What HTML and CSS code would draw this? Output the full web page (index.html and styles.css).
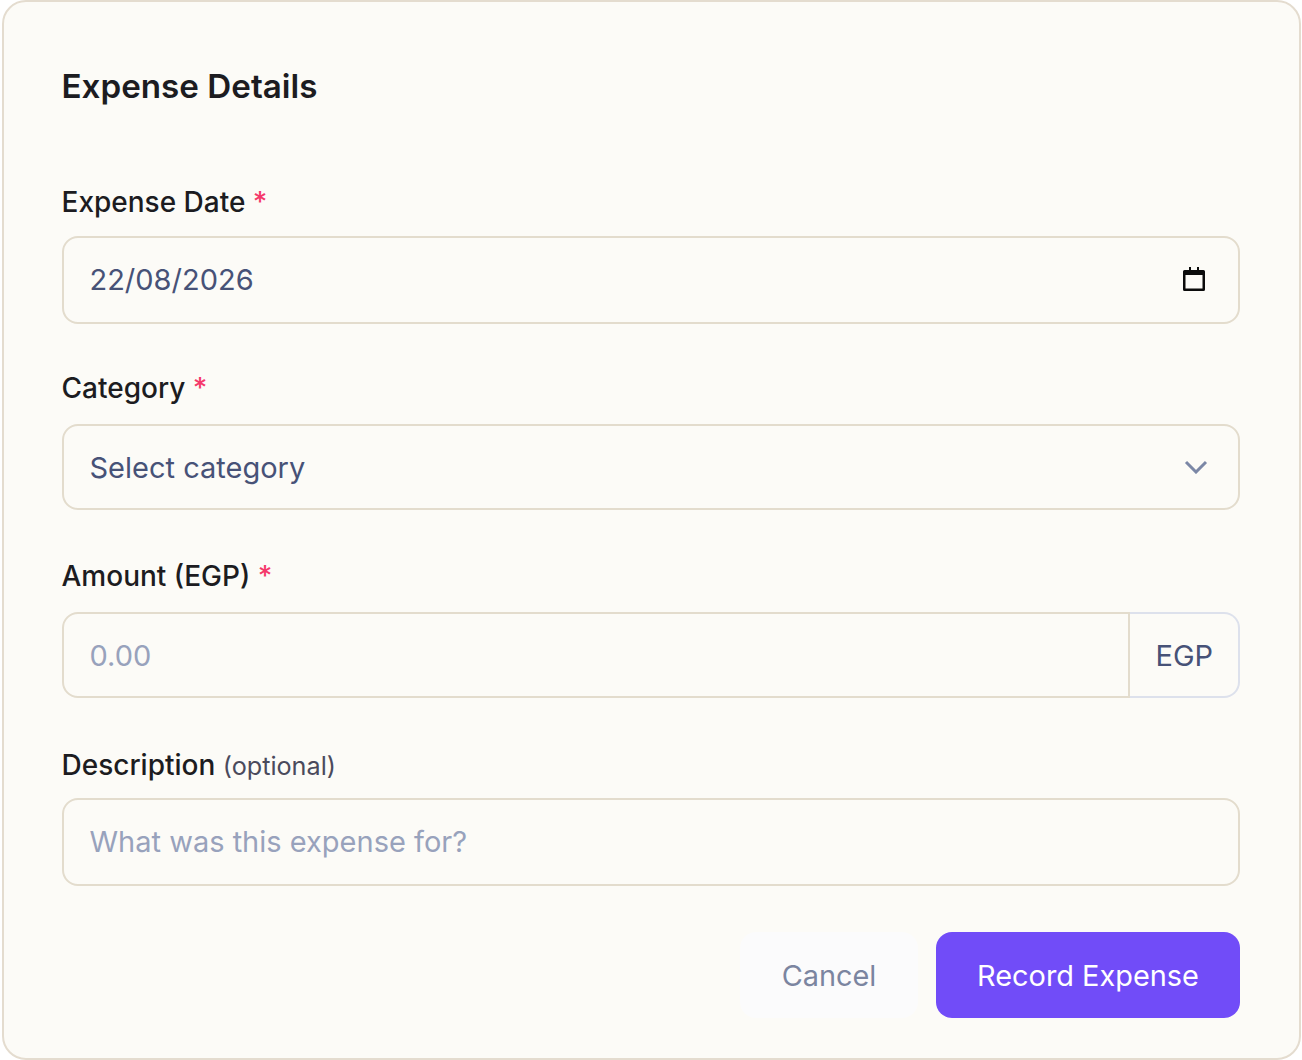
FILE: index.html
```html
<!DOCTYPE html>
<html lang="en">
  <head>
    <meta charset="UTF-8" />
    <meta name="viewport" content="width=device-width, initial-scale=1.0" />
    <title>Expense Details</title>

    <link rel="stylesheet" href="styles.css">
  </head>

  <body>
    <div class="card">
      <h2 class="card-title">Expense Details</h2>

      <form class="expense-form">
        <div class="field field-date">
          <label class="field-label" for="expenseDate">Expense Date <span class="required">*</span></label>
          <div class="input-box input-box-tall">
            <input id="expenseDate" class="text-input date-input" type="text" value="22/08/2026" />
            <svg class="calendar-icon" width="24" height="24" viewBox="0 0 24 24" aria-hidden="true">
              <path fill="#0b0b0b" fill-rule="evenodd" d="M7 0h2v3h6V0h2v3h4.500A1.500 1.500 0 0 1 23 4.500v18a1.500 1.500 0 0 1-1.500 1.500h-19A1.500 1.500 0 0 1 1 22.500v-18A1.500 1.500 0 0 1 2.500 3H7V0zM3.500 8v13.500h17V8h-17z" />
            </svg>
          </div>
        </div>

        <div class="field field-category">
          <label class="field-label" for="category">Category <span class="required">*</span></label>
          <div class="input-box">
            <div id="category" class="select-value">Select category</div>
            <svg class="chevron-icon" width="24" height="14" viewBox="0 0 24 14" aria-hidden="true">
              <path d="M2 2l10 10L22 2" fill="none" stroke="#7b87a6" stroke-width="3" />
            </svg>
          </div>
        </div>

        <div class="field field-amount">
          <label class="field-label" for="amount">Amount (EGP) <span class="required">*</span></label>
          <div class="amount-group">
            <input id="amount" class="text-input amount-input" type="text" placeholder="0.00" />
            <div class="amount-suffix">EGP</div>
          </div>
        </div>

        <div class="field field-description">
          <label class="field-label" for="description">Description <span class="optional">(optional)</span></label>
          <div class="input-box input-box-tall">
            <input id="description" class="text-input" type="text" placeholder="What was this expense for?" />
          </div>
        </div>

        <div class="form-actions">
          <button type="button" class="btn btn-cancel">Cancel</button>
          <button type="submit" class="btn btn-primary">Record Expense</button>
        </div>
      </form>
    </div>
  </body>
</html>
```

FILE: styles.css
```css
/* General Reset */
* {
  margin: 0;
  padding: 0;
  box-sizing: border-box;
  font-family: "Inter", sans-serif;
}

html,
body {
  height: 100%;
}

body {
  background: #ffffff;
  color: #1c1c21;
  padding: 0 1px 0 2px;
  overflow: hidden;
}

.card {
  height: 1060px;
  background: #fcfbf7;
  border: 2px solid #e4dccf;
  border-radius: 24px;
  padding: 64px 59px 0 58px;
}

.card-title {
  font-size: 33.2px;
  line-height: 40px;
  font-weight: 600;
  color: #1c1c21;
  margin-left: -0.5px;
  margin-bottom: 76px;
}

.field {
  margin-bottom: 44px;
}

.field-category {
  margin-bottom: 46px;
}

.field-amount {
  margin-bottom: 47px;
}

.field-description {
  margin-bottom: 46px;
}

.field-label {
  display: block;
  font-size: 28px;
  line-height: 40px;
  font-weight: 500;
  color: #1c1c21;
  margin-left: -0.5px;
  margin-bottom: 16px;
}

.field-date .field-label {
  margin-bottom: 14px;
}

.field-description .field-label {
  margin-bottom: 12px;
}

.required {
  color: #f5386b;
}

.optional {
  font-size: 25.2px;
  font-weight: 400;
  color: #4a4a5c;
}

.input-box {
  display: flex;
  align-items: center;
  height: 86px;
  padding: 0 30px 0 25.5px;
  border: 2px solid #e3dccd;
  border-radius: 16px;
  background: #fcfbf7;
}

.input-box-tall {
  height: 88px;
  padding-bottom: 2px;
}

.text-input {
  flex: 1;
  min-width: 0;
  border: none;
  outline: none;
  background: transparent;
  font-size: 29px;
  color: #475277;
}

.text-input::placeholder {
  color: #98a2bc;
  opacity: 1;
}

.select-value {
  flex: 1;
  font-size: 29px;
  color: #475277;
}

.calendar-icon {
  flex: none;
  margin-right: 2px;
}

.chevron-icon {
  flex: none;
}

.amount-group {
  display: flex;
  height: 86px;
}

.amount-input {
  height: 100%;
  padding: 0 25.5px;
  border: 2px solid #e3dccd;
  border-radius: 16px 0 0 16px;
}

.amount-suffix {
  display: flex;
  align-items: center;
  width: 110px;
  padding-left: 25.5px;
  border: 2px solid #dde1ec;
  border-left: none;
  border-radius: 0 16px 16px 0;
  font-size: 29px;
  color: #475277;
}

.form-actions {
  display: flex;
  justify-content: flex-end;
  gap: 18px;
}

.btn {
  height: 86px;
  border: none;
  border-radius: 16px;
  font-size: 28.9px;
  font-weight: 400;
}

.btn-cancel {
  width: 178px;
  background: #fbfbfc;
  color: #7b85a0;
}

.btn-primary {
  width: 304px;
  background: #714cf8;
  color: #ffffff;
}
```
